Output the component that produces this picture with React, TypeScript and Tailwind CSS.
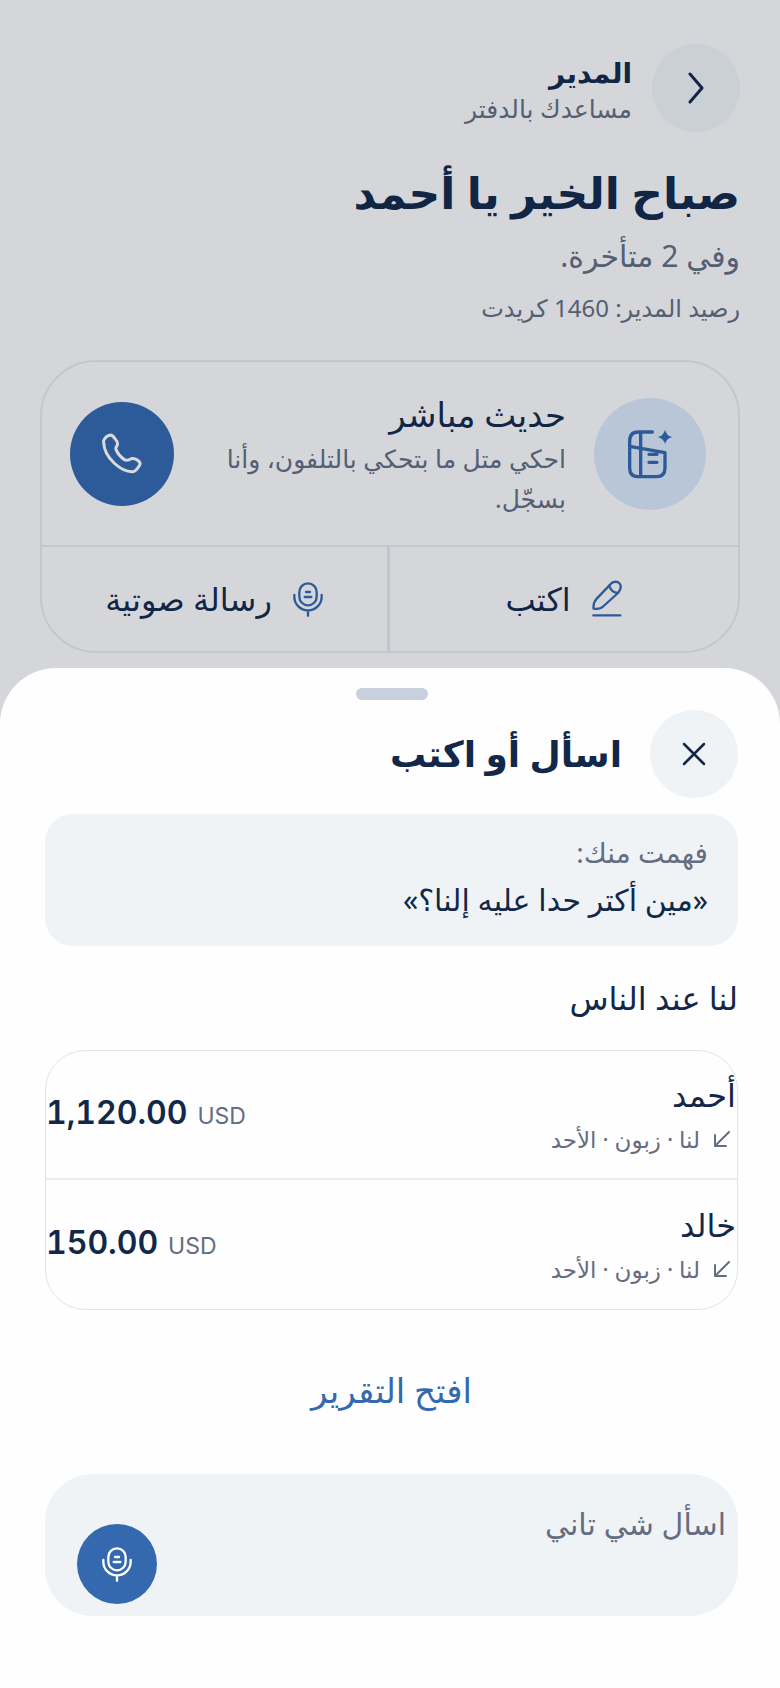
import { useState } from "react";

interface Account {
  name: string;
  details: string;
  amount: string;
  currency: string;
}

const accounts: Account[] = [
  { name: "أحمد", details: "لنا · زبون · الأحد", amount: "1,120.00", currency: "USD" },
  { name: "خالد", details: "لنا · زبون · الأحد", amount: "150.00", currency: "USD" },
];

function MicIcon({ className }: { className?: string }) {
  return (
    <svg viewBox="0 0 96 108" className={className} fill="none" stroke="currentColor" strokeWidth="7" strokeLinecap="round" aria-hidden="true">
      <rect x="22" y="7" width="52" height="66" rx="26" />
      <path d="M7 42v5a41 41 0 0 0 82 0v-5M48 89v15M42 33h12M38 48h20" />
    </svg>
  );
}

function PhoneIcon() {
  return (
    <svg viewBox="0 0 126 126" className="size-[42px]" fill="none" stroke="currentColor" strokeWidth="9" strokeLinejoin="round" aria-hidden="true">
      <path d="M8 28C6 22 14 11 22 8c8-4 14 0 19 8 7 8 11 13 8 20-4 6-7 9-3 16 5 11 14 21 24 28 7 4 10 2 17-1 6-4 11-3 20 1 9 5 12 10 9 16-5 9-11 19-20 20C62 118 10 76 8 28Z" />
    </svg>
  );
}

function PencilIcon() {
  return (
    <svg viewBox="0 0 96 120" className="h-10 w-8" fill="none" stroke="currentColor" strokeWidth="7" strokeLinecap="round" strokeLinejoin="round" aria-hidden="true">
      <path d="M8 89C6 78 10 67 18 58l40-42c9-10 22-10 28-2 6 9 3 19-5 28L38 81c-8 8-19 10-30 8Z" />
      <path d="M55 20c3 12 11 20 25 22M7 109h81" />
    </svg>
  );
}

function LedgerIcon() {
  return (
    <svg viewBox="0 0 156 156" className="size-[52px]" fill="none" stroke="currentColor" strokeWidth="10" strokeLinecap="round" strokeLinejoin="round" aria-hidden="true">
      <path d="M85 12H42Q17 12 17 40v80q0 26 25 26h56q25 0 25-26V74L17 55M50 12v134M75 79h24M75 103h24" />
      <path d="M123 5q4 18 22 22-18 4-22 22-4-18-22-22 18-4 22-22Z" fill="currentColor" stroke="none" />
    </svg>
  );
}

export default function App() {
  const [question, setQuestion] = useState<string>("");

  return (
    <div
      dir="rtl"
      lang="ar"
      className="relative min-h-screen overflow-hidden bg-[#fbfbfc] text-[#12284a] font-['Noto_Sans','DejaVu_Sans',sans-serif]"
    >
      <main className="px-10 pt-11">
        <header className="flex items-center gap-5">
          <button aria-label="رجوع" className="flex size-[88px] shrink-0 items-center justify-center rounded-full bg-[#eff3f6]">
            <svg viewBox="0 0 16 32" className="h-8 w-4" fill="none" stroke="currentColor" strokeWidth="3" strokeLinecap="round" strokeLinejoin="round" aria-hidden="true">
              <path d="M2 2l12 14L2 30" />
            </svg>
          </button>
          <div className="pt-1">
            <p className="text-[28px] leading-9 font-bold">المدير</p>
            <p className="text-[25px] leading-9 text-[#646d82]">مساعدك بالدفتر</p>
          </div>
        </header>

        <h1 className="mt-7 text-[44px] leading-[64px] font-bold">صباح الخير يا أحمد</h1>
        <p className="mt-3 text-[30px] leading-10 text-[#646d82]">وفي 2 متأخرة.</p>
        <p className="mt-3 text-[24px] leading-10 text-[#646d82]">رصيد المدير: 1460 كريدت</p>

        <section className="mt-8 overflow-hidden rounded-[56px] border-2 border-[#e5e9ec]">
          <div className="flex h-[183px] items-center gap-7 pr-8 pl-7">
            <div className="flex size-28 shrink-0 items-center justify-center rounded-full bg-[#d9e8f8] text-[#3468af]">
              <LedgerIcon />
            </div>
            <div className="flex-1 pt-1">
              <h2 className="text-[34px] leading-10 font-medium">حديث مباشر</h2>
              <p className="mt-1 text-[25px] leading-10 text-[#646d82]">احكي متل ما بتحكي بالتلفون، وأنا بسجّل.</p>
            </div>
            <button aria-label="اتصال" className="flex size-[104px] shrink-0 items-center justify-center rounded-full bg-[#3468af] text-white">
              <PhoneIcon />
            </button>
          </div>
          <div className="grid h-[106px] grid-cols-2 border-t-2 border-[#e5e9ec] text-[32px]">
            <button className="flex items-center justify-center gap-5">
              <span className="text-[#3468af]">
                <PencilIcon />
              </span>
              اكتب
            </button>
            <button className="flex items-center justify-center gap-5 border-r-[3px] border-[#e5e9ec]">
              <MicIcon className="h-9 w-8 text-[#3468af]" />
              رسالة صوتية
            </button>
          </div>
        </section>
      </main>

      <div className="fixed inset-0 bg-[#0f172a]/16" />

      <section role="dialog" aria-labelledby="sheet-title" className="fixed inset-x-0 bottom-0 rounded-t-[56px] bg-[#fefefe] pt-5 pr-[42px] pb-[72px] pl-[45px]">
        <div className="mx-auto h-3 w-[72px] rounded-full bg-[#c8d0de]" />
        <div className="mt-2.5 flex items-center gap-7">
          <button aria-label="إغلاق" className="flex size-[88px] shrink-0 items-center justify-center rounded-full bg-[#eff3f6]">
            <svg viewBox="0 0 24 24" className="size-6" fill="none" stroke="currentColor" strokeWidth="2.5" strokeLinecap="round" aria-hidden="true">
              <path d="M2 2l20 20M22 2L2 22" />
            </svg>
          </button>
          <h2 id="sheet-title" className="text-[36px] leading-[56px] font-bold">اسأل أو اكتب</h2>
        </div>

        <div className="mt-4 rounded-[28px] bg-[#eff3f6] px-[30px] pt-5 pb-6">
          <p className="text-[28px] leading-9 text-[#646d82]">فهمت منك:</p>
          <p className="mt-2 text-[30px] leading-[44px]">«مين أكتر حدا عليه إلنا؟»</p>
        </div>

        <h3 className="mt-8 text-[32px] leading-10 font-medium">لنا عند الناس</h3>

        <ul className="mt-8 divide-y-2 divide-[#eaedef] overflow-hidden rounded-[40px] border border-[#dfe4e7]">
          {accounts.map((account) => (
            <li key={account.name} className="flex h-[129px] items-center justify-between pr-px">
              <div className="pt-1">
                <p className="text-[32px] leading-10 font-medium">{account.name}</p>
                <p className="mt-1 flex items-center gap-3.5 pr-1.5 text-[23px] leading-10 text-[#646d82]">
                  <svg viewBox="0 0 16 16" className="size-4" fill="none" stroke="currentColor" strokeWidth="2" strokeLinecap="round" strokeLinejoin="round" aria-hidden="true">
                    <path d="M15 1L1 15M1 4v11h11" />
                  </svg>
                  {account.details}
                </p>
              </div>
              <p dir="ltr" className="flex items-baseline gap-2.5 font-['Inter',sans-serif] tabular-nums">
                <span className="text-[32px] leading-10 font-semibold">{account.amount}</span>
                <span className="text-[23px] leading-10 text-[#646d82]">{account.currency}</span>
              </p>
            </li>
          ))}
        </ul>

        <a href="#report" className="mx-auto mt-11 flex h-[72px] w-fit items-center text-[34px] font-medium text-[#3468af]">
          افتح التقرير
        </a>

        <div className="mt-12 flex h-[142px] items-end rounded-[48px] bg-[#eff3f6] pr-3 pb-3 pl-8">
          <textarea
            aria-label="اسأل شي تاني"
            placeholder="اسأل شي تاني"
            value={question}
            onChange={(e) => setQuestion(e.target.value)}
            className="h-[100px] flex-1 resize-none bg-transparent text-[30px] leading-10 outline-none placeholder:text-[#646d82]"
          />
          <button aria-label="تسجيل" className="flex size-20 shrink-0 items-center justify-center rounded-full bg-[#3468af] text-white">
            <MicIcon className="h-9 w-8" />
          </button>
        </div>
      </section>
    </div>
  );
}
